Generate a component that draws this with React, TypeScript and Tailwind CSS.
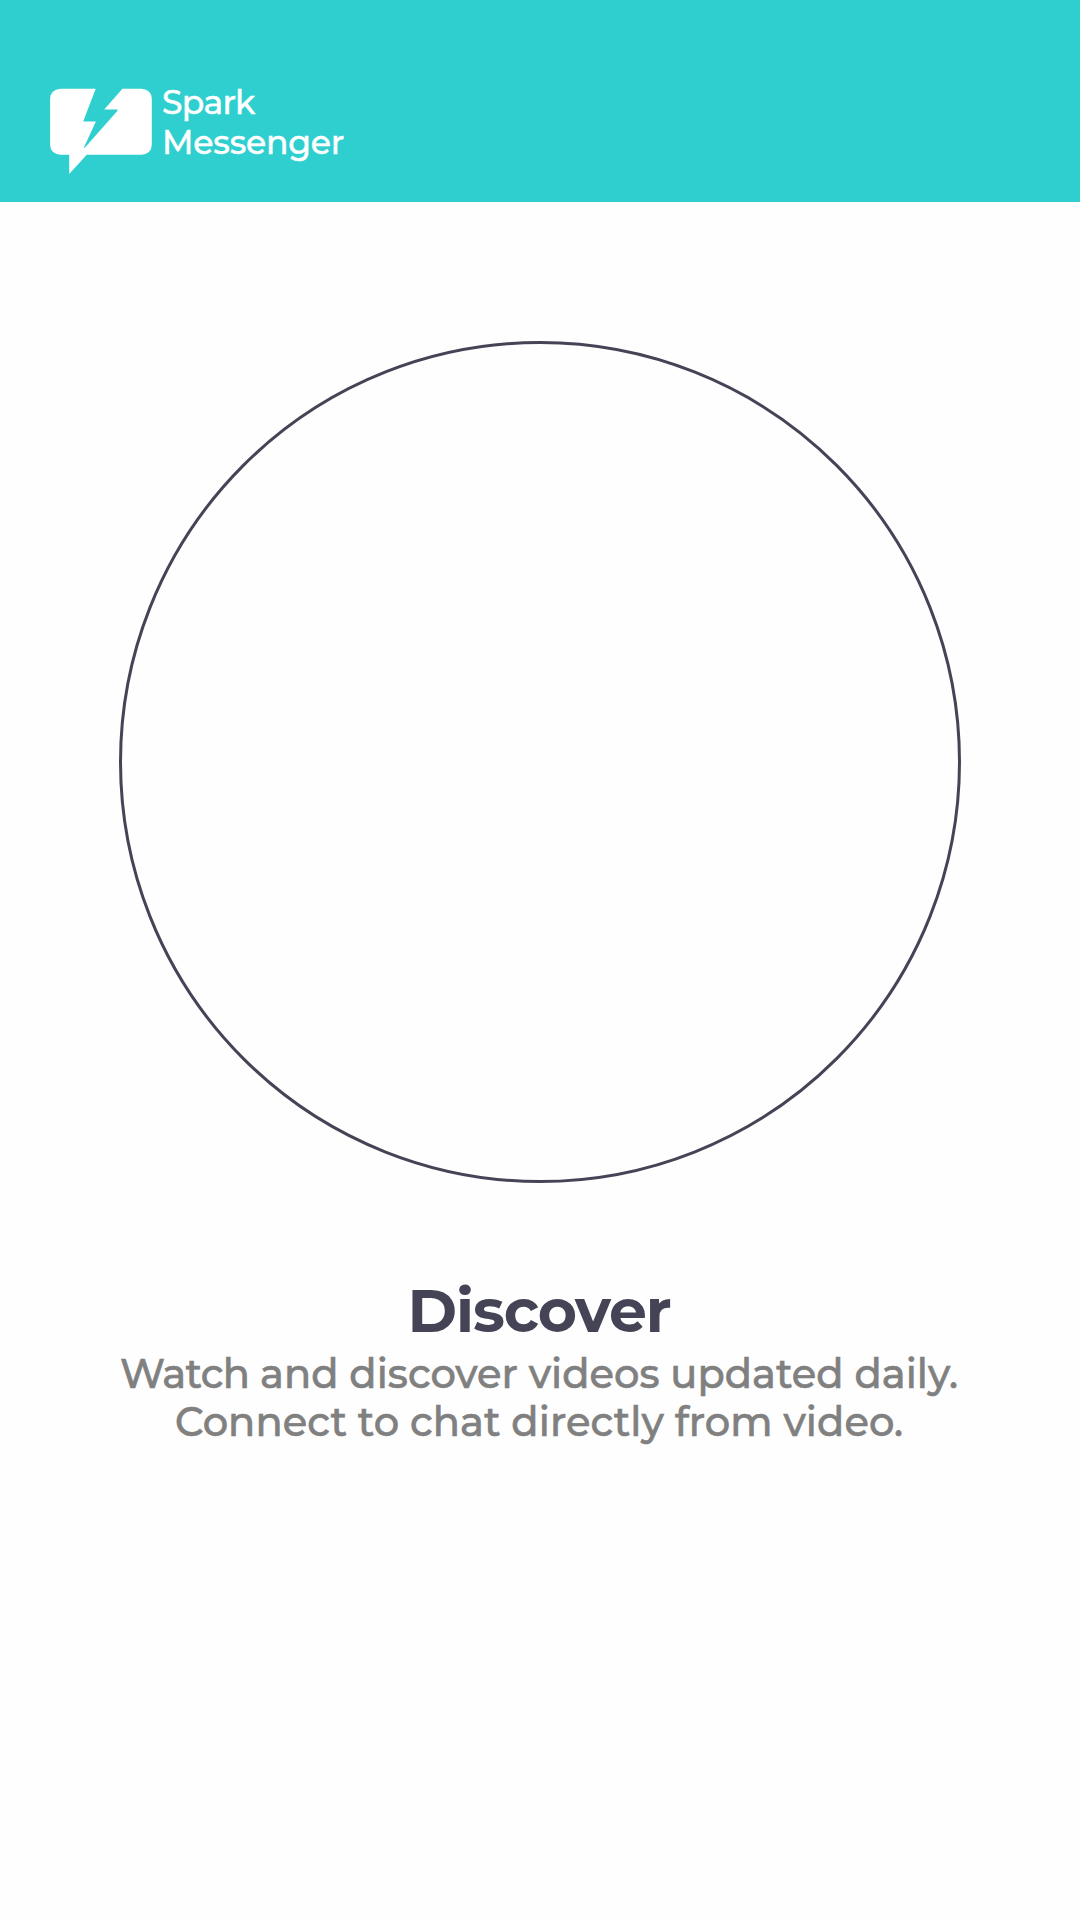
function Logo() {
  return (
    <svg className="h-[86px] w-[102px] shrink-0" viewBox="50 88 102 86" fill="#ffffff" aria-hidden="true">
      <path d="M60.5 88.8H95.7L83.2 121.5H95.9L83.8 147.8H84.8L117.5 110.8V109.5H104.2L122.4 88.8H141.5Q151.8 90 151.8 99V144.4Q151.8 153.4 141.5 154.7H86.8L69.2 173.9V154.7H60.5Q50.1 153.4 50.1 144.4V99Q50.1 90 60.5 88.8Z" />
    </svg>
  );
}

export default function App() {
  return (
    <div className="flex h-[1920px] w-[1080px] flex-col overflow-hidden bg-[#fefefe] font-['Montserrat','Inter',sans-serif]">
      <header className="flex h-[202px] shrink-0 items-start bg-[#2fcfd0] pl-[50px]">
        <div className="pt-[88px]">
          <Logo />
        </div>
        <div className="flex flex-col items-start pt-[82px] pl-[10px] text-[33px] leading-[40px] font-medium whitespace-nowrap text-white [-webkit-text-stroke:0.4px_#ffffff]">
          <span className="tracking-[-0.7px]">Spark</span>
          <span className="tracking-[-0.2px]">Messenger</span>
        </div>
      </header>
      <main className="flex flex-col items-center pt-[139px]">
        <div className="size-[842px] rounded-full border-3 border-[#444456]" />
        <h1 className="mt-[98px] pr-[2px] text-[60px] leading-[60px] font-bold tracking-[-1.1px] whitespace-nowrap text-[#444456]">Discover</h1>
        <div className="mt-[9px] flex flex-col items-center pr-[2px] text-[40px] leading-[48px] font-medium whitespace-nowrap text-[#808080] [-webkit-text-stroke:0.6px_#808080]">
          <p className="tracking-[0.02px]">
            <span className="tracking-[-0.6px]">Watch</span> and discover videos updated daily.
          </p>
          <p className="tracking-[0.06px]">Connect to chat directly from video.</p>
        </div>
      </main>
    </div>
  );
}
